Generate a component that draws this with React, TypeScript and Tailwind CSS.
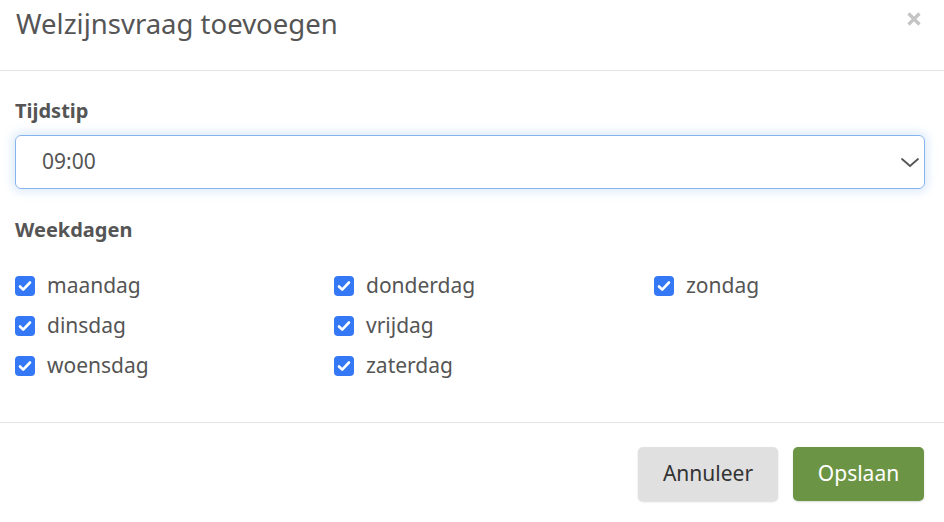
import React, { useState } from "react";

const days = [
  ["maandag", "dinsdag", "woensdag"],
  ["donderdag", "vrijdag", "zaterdag"],
  ["zondag"],
];

const CheckItem = ({ label }: { label: string }) => {
  const [checked, setChecked] = useState(true);
  return (
    <label
      className="flex items-center h-10 cursor-pointer"
      onClick={() => setChecked(!checked)}
    >
      <span
        className={`w-5 h-5 rounded-[4px] flex items-center justify-center ${checked ? "bg-[#3478f6]" : "border border-gray-400 bg-white"}`}
      >
        {checked && (
          <svg viewBox="0 0 16 16" className="w-4 h-4">
            <path
              d="M3 8.5l3.2 3.2L13 4.5"
              fill="none"
              stroke="white"
              strokeWidth="2.6"
              strokeLinecap="round"
              strokeLinejoin="round"
            />
          </svg>
        )}
      </span>
      <span className="ml-3 text-[21px] text-[#555]">{label}</span>
    </label>
  );
};

export default function App() {
  return (
    <div
      className="w-[944px] h-[522px] bg-white text-[#555]"
      style={{ fontFamily: '"Noto Sans", "Open Sans", sans-serif' }}
    >
      {/* header */}
      <div className="h-[71px] border-b border-[#e5e5e5] flex items-start justify-between pl-4 pr-[22px]">
        <h1 className="text-[27.5px] text-[#555] mt-[3px]">
          Welzijnsvraag toevoegen
        </h1>
        <svg viewBox="0 0 16 16" className="w-4 h-4 mt-[11px]">
          <path
            d="M2.5 2.5l11 11M13.5 2.5l-11 11"
            stroke="#c4c4c4"
            strokeWidth="3.2"
          />
        </svg>
      </div>

      {/* body */}
      <div className="pl-[15px] pr-[19px] pt-[26px] h-[352px] border-b border-[#e5e5e5]">
        <div className="text-[20px] font-bold text-[#555] leading-7">Tijdstip</div>
        <div className="mt-[10px] h-[54px] rounded-[6px] border border-[#86b4ee] shadow-[0_0_10px_3px_rgba(120,170,235,0.25)] flex items-center justify-between pl-[26px] pr-[2px]">
          <span className="text-[21px] text-[#555]">09:00</span>
          <svg viewBox="0 0 24 24" className="w-6 h-6">
            <path
              d="M4 9l8 7 8-7"
              fill="none"
              stroke="#555"
              strokeWidth="1.8"
              strokeLinecap="round"
            />
          </svg>
        </div>
        <div className="mt-[27px] text-[20px] font-bold text-[#555] leading-7">
          Weekdagen
        </div>
        <div className="mt-[22px] grid grid-cols-[319px_320px_1fr]">
          {days.map((col, i) => (
            <div key={i} className="flex flex-col">
              {col.map((d) => (
                <CheckItem key={d} label={d} />
              ))}
            </div>
          ))}
        </div>
      </div>

      {/* footer */}
      <div className="flex justify-end gap-[15px] pr-[20px] pt-[24px]">
        <button className="h-[54px] w-[140px] rounded-[5px] bg-[#e0e0e0] text-[#333] text-[21px] shadow-[0_1px_2px_rgba(0,0,0,0.15)]">
          Annuleer
        </button>
        <button className="h-[54px] w-[131px] rounded-[5px] bg-[#6b9444] text-white text-[21px] shadow-[0_1px_2px_rgba(0,0,0,0.15)]">
          Opslaan
        </button>
      </div>
    </div>
  );
}
